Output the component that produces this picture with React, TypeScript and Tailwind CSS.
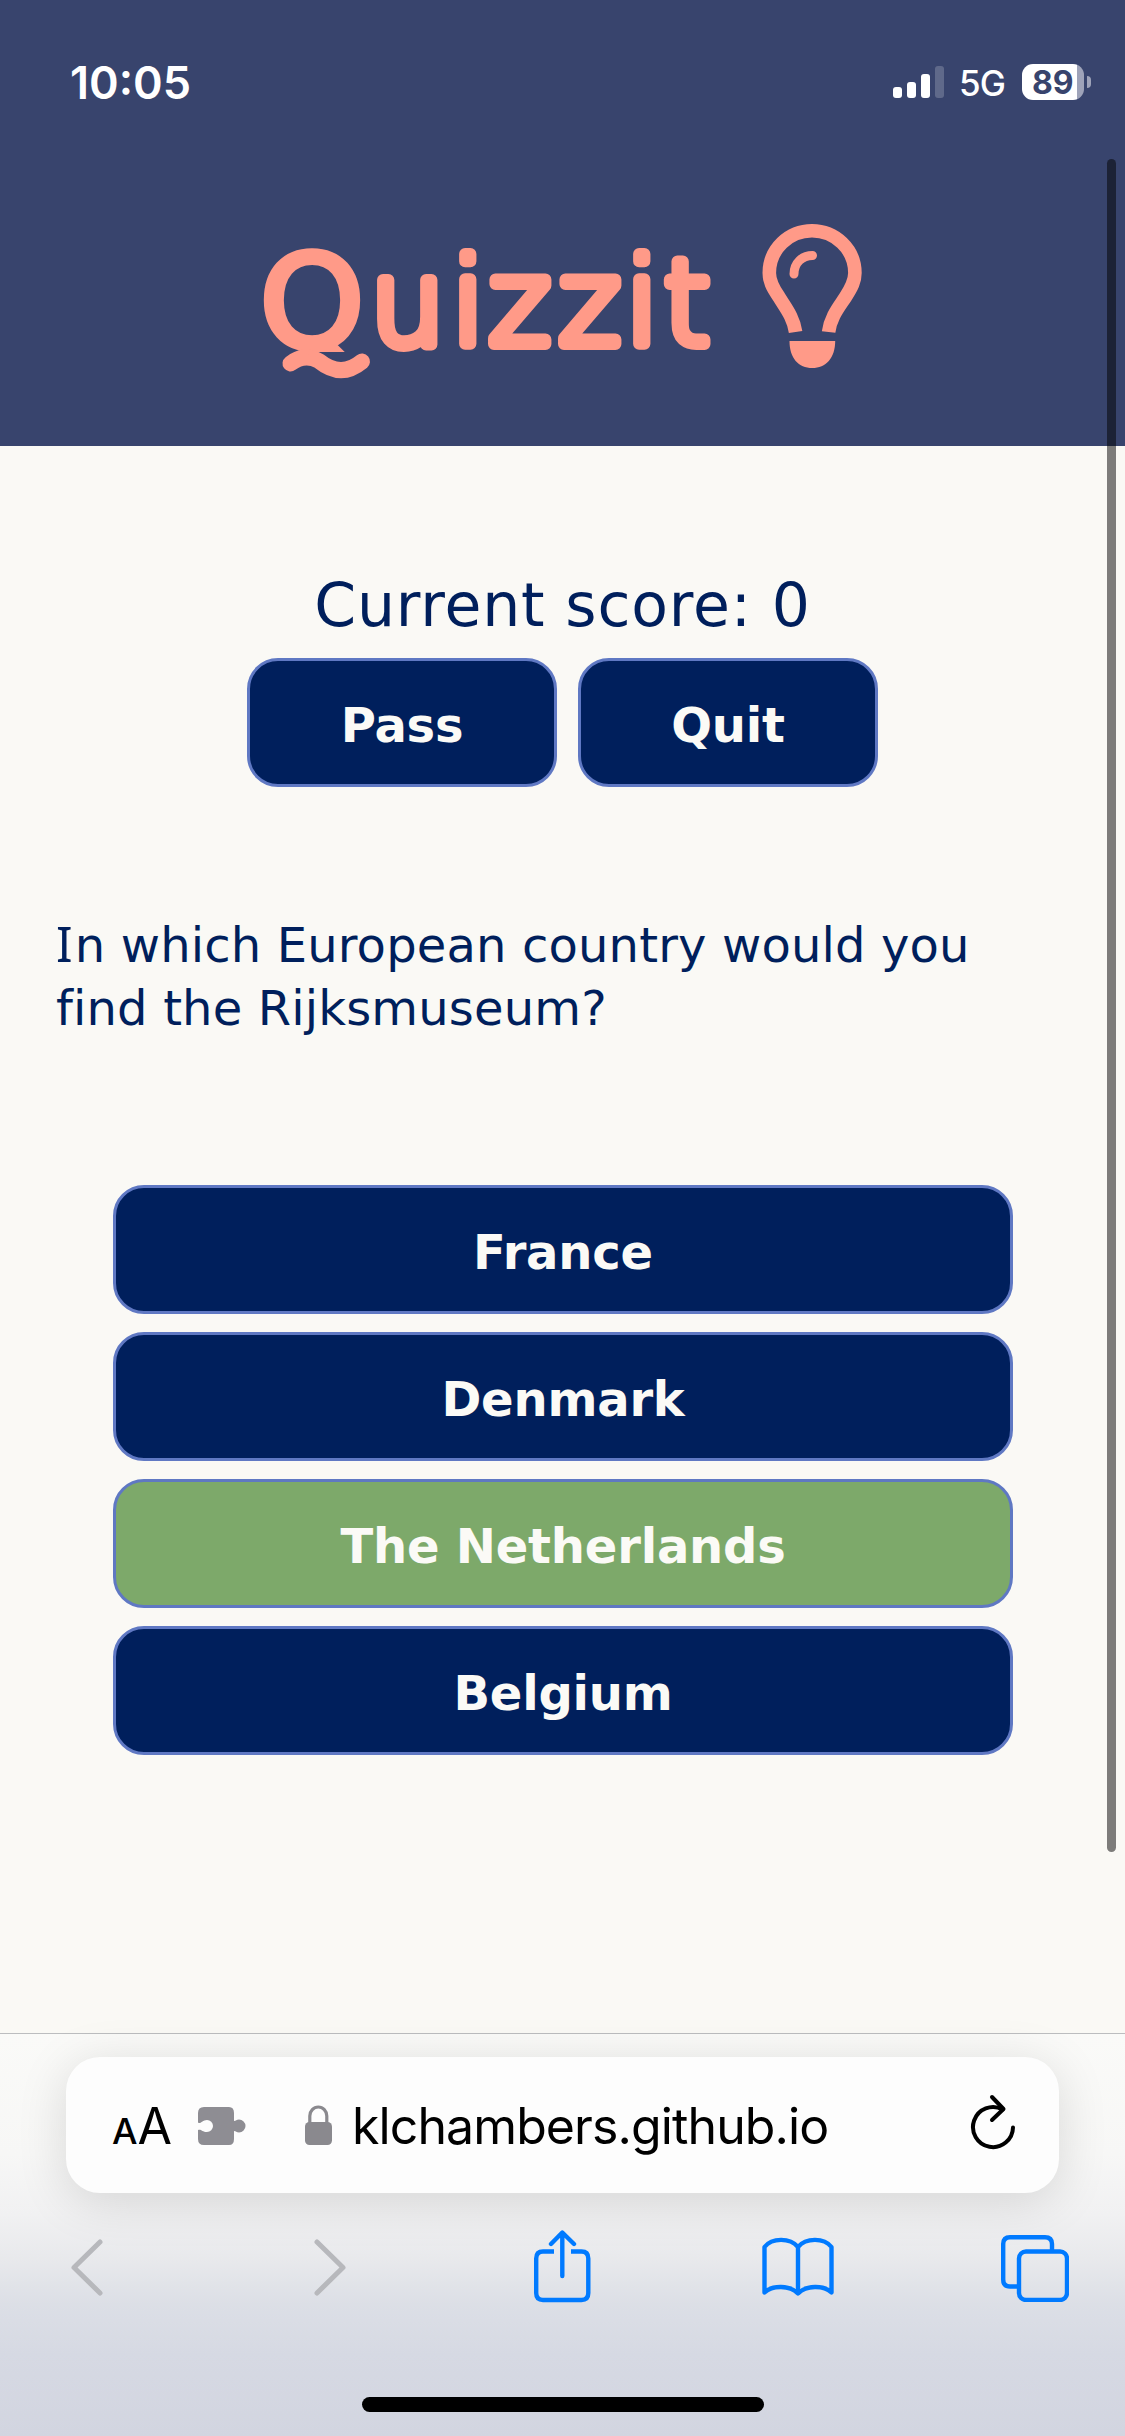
import React from "react";

function StatusBar() {
  return (
    <div className="flex h-[160px] items-start justify-between pl-[70px] pr-[34px] pt-[64px] font-[Inter] text-white">
      <div className="mt-[-3px] text-[45px] font-semibold leading-[44px] tracking-[0px]">10:05</div>
      <div className="flex items-start">
        <div className="flex h-[34px] items-end gap-[5px]">
          <span className="h-[11px] w-[9px] rounded-[3px] bg-white" />
          <span className="h-[16px] w-[9px] rounded-[3px] bg-white" />
          <span className="h-[24px] w-[9px] rounded-[3px] bg-white" />
          <span className="h-[32px] w-[9px] rounded-[3px] bg-white/20" />
        </div>
        <div className="ml-[15px] mt-[1px] w-[48px] text-[35px] font-medium leading-[36px] tracking-[-1px]">5G</div>
        <div className="ml-[15px] flex h-[36px] w-[62px] items-center rounded-[11px] bg-[linear-gradient(90deg,#fff_55px,#9ea3b9_55px)] pl-[10px] pt-[1px] text-[32px] font-bold leading-[36px] tracking-[0px] text-[#38446d]">
          89
        </div>
        <div className="ml-[3px] mt-[12px] h-[12px] w-[4px] rounded-r-full bg-[#9ea3b9]" />
      </div>
    </div>
  );
}

function Logo() {
  return (
    <svg className="ml-[256px] mt-[50px] block" width="614" height="180" viewBox="256 210 614 180">
      <defs>
        <clipPath id="bowl">
          <rect x="250" y="230" width="130" height="122" />
        </clipPath>
      </defs>
      <g
        fill="#ff9a88"
        stroke="#ff9a88"
        strokeLinejoin="round"
        fontFamily="'DejaVu Sans'"
        fontWeight="200"
        fontSize="117"
      >
        <g clipPath="url(#bowl)">
          <text transform="translate(259.500 343.500) scale(1.14 1.035)" strokeWidth="11.500">Q</text>
        </g>
        <text x="370.500 452 489 559 626 664" y="344" strokeWidth="12">uizzit</text>
      </g>
      <g fill="none" stroke="#ff9a88">
        <path
          d="M290.500 363.500C299 357 309 355 319 361C334 373 348 373 362 361.500"
          strokeWidth="16"
          strokeLinecap="round"
        />
        <path
          d="M795.6 332C793.5 317 785 307 779 297C772 287 769.3 281 769.3 273C769.3 249 789 230.8 812 230.8C835 230.8 854.9 249 854.9 273C854.9 281 852 287 845.5 297C839 307 830.5 317 828.6 332"
          strokeWidth="13.6"
        />
        <path d="M794 274C794 263 802 255.500 812.500 255.500" strokeWidth="9" strokeLinecap="round" />
      </g>
      <path d="M303 351H317L311 357Z M789.500 341H835.200C835.200 358 826 368 812.300 368C798.500 368 789.500 358 789.500 341Z" fill="#ff9a88" />
    </svg>
  );
}

const buttonBase =
  "flex h-[129px] items-center justify-center rounded-[31px] border-[3px] border-[#5f78c3] pt-[5px] text-[48px] font-bold text-[#fbfaf6] tracking-[-0.2px]";

const options = [
  { name: "France", correct: false },
  { name: "Denmark", correct: false },
  { name: "The Netherlands", correct: true },
  { name: "Belgium", correct: false },
];

function AddressBar() {
  return (
    <div className="mx-[66px] flex h-[136px] items-center rounded-[34px] bg-[#fdfdfd] font-[Inter] text-black shadow-[0_8px_50px_rgba(0,0,0,0.13)]">
      <div className="ml-[46px] mt-[6px] flex w-[62px] items-baseline leading-[60px]">
        <span className="text-[36px] font-medium leading-[60px]">A</span>
        <span className="text-[50px] leading-[60px]">A</span>
      </div>
      <svg className="ml-[24px] mt-[2px]" width="48" height="40" viewBox="0 0 48 40" fill="#8e8d93">
        <path d="M6 1H31Q36 1 36 7V15C38 15 38.500 13.500 41 13.500A6.200 6.200 0 0 1 41 26.500C38.500 26.500 38 25 36 25V33Q36 39 31 39H6Q0 39 0 33V24C3 22.500 4 26 9 26A6 6 0 0 0 9 14C4 14 3 18.500 0 16.500V7Q0 1 6 1Z" />
      </svg>
      <svg className="ml-[58px]" width="29" height="42" viewBox="0 0 29 42">
        <rect x="1" y="18" width="27" height="23" rx="4.500" fill="#8a898e" />
        <path d="M5.800 20V12a8.500 9 0 0 1 17 0V20" fill="none" stroke="#8a898e" strokeWidth="3.200" />
      </svg>
      <div className="ml-[19px] mt-[2px] flex-1 whitespace-nowrap text-[50px] leading-[60px] tracking-[-0.9px]">klchambers.github.io</div>
      <svg className="mr-[42px] mt-[-2px]" width="48" height="60" viewBox="0 0 48 60" fill="none" stroke="#000" strokeWidth="4" strokeLinecap="round" strokeLinejoin="round">
        <path d="M44 33.500A20 20 0 1 1 33.500 15.500" />
        <path d="M23 3L34.500 15L23 26" />
      </svg>
    </div>
  );
}

function Toolbar() {
  return (
    <div className="flex h-[74px] items-center pl-[69px]">
      <svg width="35" height="58" viewBox="0 0 35 58" fill="none" stroke="#b7b8bc" strokeWidth="5" strokeLinecap="round" strokeLinejoin="round">
        <path d="M31 4L5 29.500L31 55" />
      </svg>
      <svg className="ml-[209px]" width="35" height="58" viewBox="0 0 35 58" fill="none" stroke="#b7b8bc" strokeWidth="5" strokeLinecap="round" strokeLinejoin="round">
        <path d="M4 4L30 29.500L4 55" />
      </svg>
      <svg className="ml-[185px]" width="58" height="74" viewBox="0 1 58 74" fill="none" stroke="#007aff" strokeWidth="4.400" strokeLinecap="butt" strokeLinejoin="round">
        <path d="M21 22.500H10Q3.200 22.500 3.200 29.500V64Q3.200 71 10 71H48.500Q55.300 71 55.300 64V29.500Q55.300 22.500 48.500 22.500H38" />
        <path d="M29.300 47V4M18 15L29.300 3.500L41 15" strokeLinecap="round" />
      </svg>
      <svg className="ml-[170px]" width="74" height="62" viewBox="0 0 74 62" fill="none" stroke="#007aff" strokeWidth="4.400" strokeLinecap="round" strokeLinejoin="round">
        <path d="M37 11C29 1.500 11 1.500 3.500 11V56.500C11 49 29 49 37 57.500C45 49 63 49 70.500 56.500V11C63 1.500 45 1.500 37 11ZM37 11V57" />
      </svg>
      <svg className="ml-[164px]" width="70" height="70" viewBox="-1 -1 70 70" fill="none" stroke="#007aff" strokeWidth="4.400">
        <path d="M18 53.500H10Q3.200 53.500 3.200 46.500V11Q3.200 4.200 10 4.200H45Q52 4.200 52 11V18" />
        <rect x="19" y="18.500" width="48" height="48.500" rx="7" />
      </svg>
    </div>
  );
}

export default function App() {
  return (
    <div className="relative flex h-[2436px] w-[1125px] flex-col overflow-hidden bg-[#faf9f5] font-['DejaVu_Sans',Verdana,sans-serif] text-[#001f5c]">
      <header className="h-[446px] shrink-0 bg-[#38446d]">
        <StatusBar />
        <Logo />
      </header>

      <main className="h-[1587px] shrink-0 pt-[124px]">
        <h2 className="text-center text-[60px] leading-[70px] tracking-[0.85px]">Current score: 0</h2>
        <div className="mt-[18px] flex justify-center gap-[21px]">
          <button className={buttonBase + " w-[310px] bg-[#001f5c]"}>Pass</button>
          <button className={buttonBase + " w-[300px] bg-[#001f5c]"}>Quit</button>
        </div>
        <p className="ml-[56px] mt-[127px] w-[1000px] text-[48px] leading-[63px] tracking-[0.15px] [font-variant-ligatures:none]">
          <span className="mr-[2px] font-['Noto_Sans'] text-[49px] leading-[0]">I</span>n which European country would you
          <br />
          find the Rijksmuseum?
        </p>
        <div className="mx-[112px] mt-[145px] flex flex-col gap-[18px] pl-px">
          {options.map((o) => (
            <button key={o.name} className={buttonBase + (o.correct ? " bg-[#7da96a]" : " bg-[#001f5c]")}>
              {o.name}
            </button>
          ))}
        </div>
      </main>

      <footer className="flex-1 border-t border-[#bcbdbf] bg-[linear-gradient(180deg,#fafaf8_0px,#f7f7f6_120px,#f1f1f2_180px,#e8e9ec_225px,#dcdfe6_270px,#d6d9e3_320px,#d2d5e0_402px)] pt-[23px]">
        <AddressBar />
        <div className="mt-[37px]">
          <Toolbar />
        </div>
        <div className="mx-auto mt-[93px] h-[15px] w-[402px] rounded-full bg-black" />
      </footer>

      <div className="absolute left-[1107px] top-[159px] h-[1693px] w-[9px] rounded-full bg-black/50" />
    </div>
  );
}
